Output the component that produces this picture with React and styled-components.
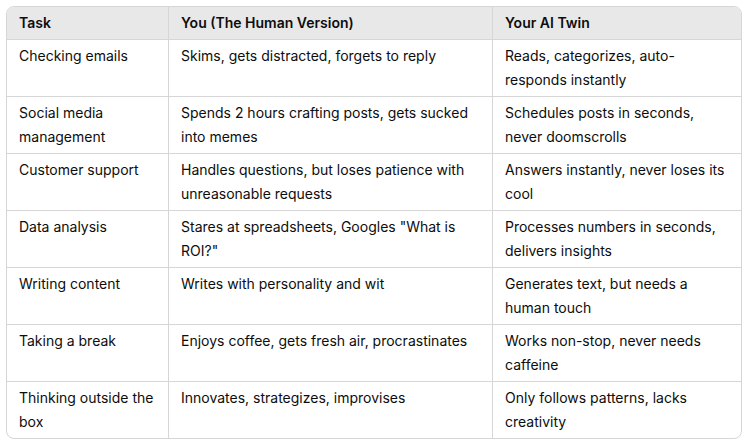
import React from "react";
import styled, { createGlobalStyle } from "styled-components";

const Global = createGlobalStyle`
  body {
    margin: 0;
    background: #ffffff;
    font-family: Inter, "Noto Sans", "Liberation Sans", sans-serif;
    color: #0d0d0d;
  }
`;

const Page = styled.div`
  padding: 6px;
`;

const Frame = styled.div`
  width: 736px;
  box-sizing: border-box;
  border: 1px solid #d6d6d6;
  border-radius: 8px;
  overflow: hidden;
`;

const Table = styled.table`
  width: 100%;
  border-collapse: separate;
  border-spacing: 0;
  table-layout: fixed;
  font-size: 14px;
  line-height: 24px;
`;

const Col = styled.col`
  width: ${(p) => p.$w}px;
`;

const Th = styled.th`
  background: #e8e8e8;
  font-weight: 600;
  text-align: left;
  padding: 4px 12px;
  vertical-align: top;
  box-sizing: border-box;
  border-left: ${(p) => (p.$first ? "none" : "1px solid #d6d6d6")};
`;

const Td = styled.td`
  padding: 4px 12px;
  vertical-align: top;
  box-sizing: border-box;
  height: 57px;
  border-top: 1px solid #d6d6d6;
  border-left: ${(p) => (p.$first ? "none" : "1px solid #d6d6d6")};
`;

const rows = [
  ["Checking emails", "Skims, gets distracted, forgets to reply", "Reads, categorizes, auto-responds instantly"],
  ["Social media management", "Spends 2 hours crafting posts, gets sucked into memes", "Schedules posts in seconds, never doomscrolls"],
  ["Customer support", "Handles questions, but loses patience with unreasonable requests", "Answers instantly, never loses its cool"],
  ["Data analysis", 'Stares at spreadsheets, Googles "What is ROI?"', "Processes numbers in seconds, delivers insights"],
  ["Writing content", "Writes with personality and wit", "Generates text, but needs a human touch"],
  ["Taking a break", "Enjoys coffee, gets fresh air, procrastinates", "Works non-stop, never needs caffeine"],
  ["Thinking outside the box", "Innovates, strategizes, improvises", "Only follows patterns, lacks creativity"],
];

export default function App() {
  return (
    <Page>
      <Global />
      <Frame>
        <Table>
          <colgroup>
            <Col $w={161} />
            <Col $w={324} />
            <Col $w={249} />
          </colgroup>
          <thead>
            <tr>
              <Th $first>Task</Th>
              <Th>You (The Human Version)</Th>
              <Th>Your AI Twin</Th>
            </tr>
          </thead>
          <tbody>
            {rows.map((r, i) => (
              <tr key={i}>
                <Td $first>{r[0]}</Td>
                <Td>{r[1]}</Td>
                <Td>{r[2]}</Td>
              </tr>
            ))}
          </tbody>
        </Table>
      </Frame>
    </Page>
  );
}
